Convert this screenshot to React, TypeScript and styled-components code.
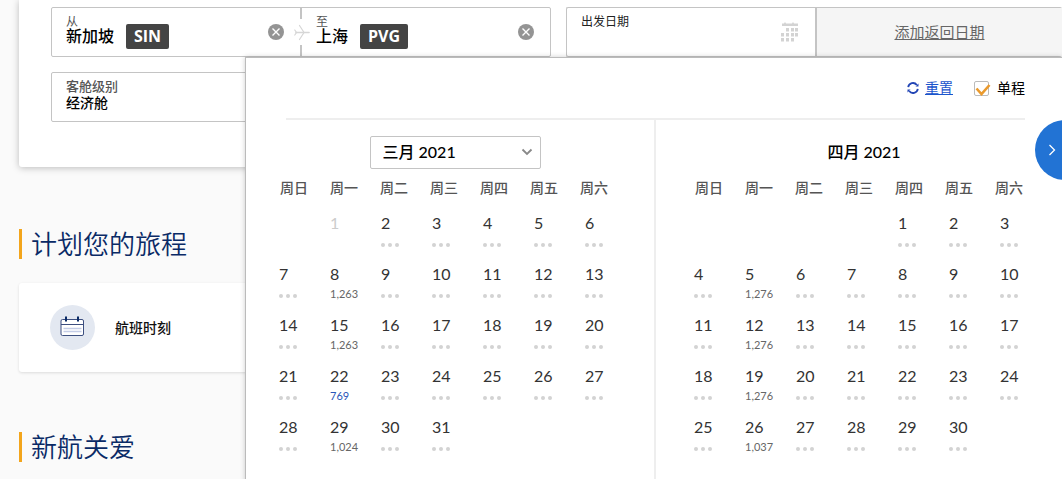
import React from "react";
import styled, { createGlobalStyle } from "styled-components";

const GlobalStyle = createGlobalStyle`
  *, *::before, *::after { box-sizing: border-box; }
  body {
    margin: 0;
    background: #fafafa;
    color: #000;
    font-family: Lato, "Noto Sans CJK SC", sans-serif;
    font-size: 14px;
    line-height: 20px;
  }
  button, input, select { font: inherit; color: inherit; margin: 0; padding: 0; border: 0; background: none; }
  button, select { cursor: pointer; }
  table { border-spacing: 0; }
`;

const Page = styled.div`
  position: relative;
  min-height: 100vh;
  padding-left: 19px;
  overflow: hidden;
`;

const SearchCard = styled.form`
  display: flex;
  flex-direction: column;
  gap: 15px;
  padding: 7px 0 45px 32px;
  background: #fff;
  border-radius: 0 0 0 3px;
  box-shadow: 0 1px 7px rgba(0, 0, 0, 0.25);
`;

const FieldRow = styled.div`
  display: flex;
  gap: 15px;
`;

const FieldGroup = styled.div<{ $grow?: boolean }>`
  position: relative;
  display: flex;
  flex: ${(p) => (p.$grow ? "1 0 0" : "0 0 500px")};
  height: 50px;
  border: 1px solid #c4c4c4;
  border-right-width: ${(p) => (p.$grow ? "0" : "1px")};
  border-radius: 2px;
`;

const Field = styled.div<{ $divided?: boolean }>`
  display: flex;
  flex: ${(p) => (p.$divided ? "0 0 250px" : "1 1 0")};
  align-items: flex-start;
  justify-content: space-between;
  padding: 4px 16px 0 14px;
  border-right: ${(p) => (p.$divided ? "2px solid #c4c4c4" : "0")};
`;

const FieldBody = styled.div`
  display: flex;
  flex-direction: column;
`;

const FieldLabel = styled.label<{ $strong?: boolean; $dark?: boolean }>`
  height: ${(p) => (p.$strong ? "17px" : "12px")};
  font-size: ${(p) => (p.$strong ? "13px" : "12px")};
  line-height: 19px;
  font-weight: ${(p) => (p.$strong ? 500 : 400)};
  color: ${(p) => (p.$dark ? "#222" : "#555")};
`;

const Place = styled.div`
  display: flex;
  align-items: flex-start;
  gap: 12px;
  height: 25px;
`;

const PlaceInput = styled.input<{ $chars: number }>`
  width: ${(p) => p.$chars}em;
  height: 22px;
  font-size: 16px;
  font-weight: 500;
  outline: 0;
`;

const AirportCode = styled.span`
  padding: 0 8px;
  border-radius: 2px;
  background: #444;
  color: #fff;
  font-family: "Open Sans", sans-serif;
  font-size: 16px;
  font-weight: 700;
  line-height: 25px;
`;

const ClearButton = styled.button`
  display: flex;
  margin-top: 12px;
`;

const SwapIcon = styled.svg`
  position: absolute;
  left: 241px;
  top: 11px;
  background: #fff;
`;

const DateInput = styled.input`
  width: 180px;
  height: 24px;
  font-size: 16px;
  outline: 0;
`;

const DateIcon = styled.svg`
  margin-top: 10px;
`;

const AddReturn = styled.button`
  flex: 1;
  background: #f5f5f5;
  color: #666;
  font-size: 15px;
  text-decoration: underline;
`;

const CabinSelect = styled.select`
  appearance: none;
  width: 200px;
  height: 18px;
  font-size: 14px;
  line-height: 18px;
  font-weight: 500;
`;

const Section = styled.section<{ $first?: boolean }>`
  padding-top: ${(p) => (p.$first ? "62px" : "60px")};
`;

const SectionTitle = styled.h2`
  margin: 0 0 24px;
  padding-left: 9px;
  border-left: 3px solid #f3a51c;
  color: #0a2a66;
  font-size: 26px;
  line-height: 30px;
  font-weight: 350;
`;

const LinkCard = styled.a`
  display: flex;
  align-items: center;
  gap: 20px;
  height: 89px;
  padding-left: 31px;
  border-radius: 3px;
  background: #fff;
  box-shadow: 0 1px 3px rgba(0, 0, 0, 0.12);
  color: #111;
  font-weight: 500;
  text-decoration: none;
`;

const Popover = styled.div`
  position: absolute;
  left: 245px;
  right: 0;
  top: 57px;
  min-height: calc(100vh - 57px);
  border: solid #bbb;
  border-width: 1px 0 0 1px;
  background: #fff;
  box-shadow: 0 0 5px rgba(0, 0, 0, 0.2);
`;

const Toolbar = styled.div`
  display: flex;
  align-items: center;
  justify-content: flex-end;
  gap: 21px;
  height: 62px;
  margin: 0 37px 0 40px;
  border-bottom: 2px solid #eee;
`;

const ResetButton = styled.button`
  display: flex;
  align-items: center;
  gap: 6px;
  color: #1a55cc;
  text-decoration: underline;
`;

const OneWay = styled.label`
  display: flex;
  align-items: center;
  gap: 8px;
`;

const TickWrap = styled.span`
  position: relative;
  display: flex;
`;

const Tick = styled.input`
  appearance: none;
  width: 15px;
  height: 15px;
  border: 1px solid #bbb;
  border-radius: 2px;
  &:not(:checked) + svg { display: none; }
`;

const TickMark = styled.svg`
  position: absolute;
  left: 0;
  top: 0;
  overflow: visible;
  pointer-events: none;
`;

const Months = styled.div`
  display: flex;
`;

const Month = styled.section<{ $divided?: boolean }>`
  flex: 0 0 ${(p) => (p.$divided ? "410px" : "395px")};
  padding: 16px 0 18px ${(p) => (p.$divided ? "33px" : "38px")};
  border-right: ${(p) => (p.$divided ? "2px solid #eee" : "0")};
`;

const MonthHead = styled.div<{ $wide?: boolean }>`
  display: flex;
  justify-content: center;
  width: ${(p) => (p.$wide ? "352px" : "340px")};
  height: 33px;
`;

const MonthTitle = styled.h3`
  margin: 0;
  font-size: 16px;
  line-height: 32px;
  font-weight: 500;
`;

const SelectWrap = styled.div`
  position: relative;
  width: 171px;
`;

const MonthSelect = styled.select`
  appearance: none;
  width: 100%;
  height: 33px;
  padding: 0 0 1px 12px;
  border: 1px solid #c4c4c4;
  border-radius: 2px;
  font-size: 16px;
  font-weight: 500;
`;

const SelectArrow = styled.svg`
  position: absolute;
  right: 8px;
  top: 12px;
  pointer-events: none;
`;

const WeekHead = styled.tr`
  display: grid;
  grid-template-columns: repeat(7, 50px);
  height: 41px;
  padding: 9px 0 0 1px;
`;

const WeekDay = styled.th`
  padding: 0;
  color: #555;
  text-align: left;
  font-weight: 500;
`;

const Week = styled.tr`
  display: grid;
  grid-template-columns: repeat(7, 51px);
  height: 51px;
`;

const DayCell = styled.td`
  padding: 0;
`;

const DayButton = styled.button`
  display: flex;
  flex-direction: column;
  align-items: flex-start;
  width: 44px;
  color: #333;
  font-size: 16px;
  line-height: 26px;
  &:disabled { color: #ccc; }
`;

const Fare = styled.span<{ $low?: boolean }>`
  color: ${(p) => (p.$low ? "#2a56b8" : "#666")};
  font-size: 11px;
  line-height: 14px;
`;

const Dots = styled.span`
  display: flex;
  gap: 3px;
  padding-top: 7px;
`;

const Dot = styled.span`
  width: 4px;
  height: 4px;
  border-radius: 50%;
  background: #d3d3d3;
`;

const NextButton = styled.button`
  position: absolute;
  right: -33px;
  top: 62px;
  display: flex;
  align-items: center;
  width: 60px;
  height: 60px;
  padding-left: 13px;
  border-radius: 50%;
  background: #2273d4;
`;

const WEEKDAYS = ["周日", "周一", "周二", "周三", "周四", "周五", "周六"];

type MonthData = { offset: number; days: number; fares: Record<number, string>; past?: number; low?: number };

const MARCH: MonthData = {
  offset: 1,
  days: 31,
  past: 1,
  low: 22,
  fares: { 8: "1,263", 15: "1,263", 22: "769", 29: "1,024" },
};
const APRIL: MonthData = {
  offset: 4,
  days: 30,
  fares: { 5: "1,276", 12: "1,276", 19: "1,276", 26: "1,037" },
};

function Clear({ label }: { label: string }) {
  return (
    <ClearButton type="button" aria-label={label}>
      <svg width="16" height="16" viewBox="0 0 16 16">
        <circle cx="8" cy="8" r="8" fill="#949494" />
        <path d="M4.5 4.5l7 7M11.5 4.5l-7 7" stroke="#fff" strokeWidth="1.4" />
      </svg>
    </ClearButton>
  );
}

function Airport({ id, label, city, code, divided }: { id: string; label: string; city: string; code: string; divided?: boolean }) {
  return (
    <Field $divided={divided}>
      <FieldBody>
        <FieldLabel htmlFor={id}>{label}</FieldLabel>
        <Place>
          <PlaceInput id={id} $chars={city.length} defaultValue={city} />
          <AirportCode>{code}</AirportCode>
        </Place>
      </FieldBody>
      <Clear label={`清除${city}`} />
    </Field>
  );
}

function Calendar({ data }: { data: MonthData }) {
  const weeks = Array.from({ length: Math.ceil((data.offset + data.days) / 7) }, (_, w) =>
    Array.from({ length: 7 }, (_, d) => w * 7 + d - data.offset + 1)
  );
  return (
    <table>
      <thead>
        <WeekHead>
          {WEEKDAYS.map((d) => (
            <WeekDay key={d} scope="col">{d}</WeekDay>
          ))}
        </WeekHead>
      </thead>
      <tbody>
        {weeks.map((week) => (
          <Week key={week[0]}>
            {week.map((day) => (
              <DayCell key={day}>
                {day > 0 && day <= data.days && (
                  <DayButton type="button" disabled={day === data.past}>
                    {day}
                    {data.fares[day] ? (
                      <Fare $low={day === data.low}>{data.fares[day]}</Fare>
                    ) : (
                      day !== data.past && <Dots><Dot /><Dot /><Dot /></Dots>
                    )}
                  </DayButton>
                )}
              </DayCell>
            ))}
          </Week>
        ))}
      </tbody>
    </table>
  );
}

export default function App() {
  return (
    <>
      <GlobalStyle />
      <Page>
        <SearchCard>
          <FieldRow>
            <FieldGroup>
              <Airport id="from" label="从" city="新加坡" code="SIN" divided />
              <Airport id="to" label="至" city="上海" code="PVG" />
              <SwapIcon width="18" height="26" viewBox="0 0 18 26" fill="none" stroke="#d6d6d6" strokeLinecap="round">
                <path d="M3 13.500h13" strokeWidth="1.600" />
                <path d="M6.500 6.500l4.500 7-4.500 7M1.800 11l1.700 2.500-1.700 2.500" strokeWidth="1.200" />
              </SwapIcon>
            </FieldGroup>
            <FieldGroup $grow>
              <Field $divided>
                <FieldBody>
                  <FieldLabel htmlFor="depart" $dark>出发日期</FieldLabel>
                  <DateInput id="depart" />
                </FieldBody>
                <DateIcon width="20" height="20" viewBox="0 0 20 20" fill="#d3d3d3">
                  <path d="M3 1.500h2L6 0l1 1.500h6L14 0l1 1.500h4V4H3z" />
                  {[6, 11, 16].map((y, r) =>
                    [2, 7, 12, 16].map((x, c) =>
                      (r === 0 && c === 0) || (r === 2 && c === 3) ? null : (
                        <rect key={`${x}-${y}`} x={x} y={y} width="3" height="3.500" />
                      )
                    )
                  )}
                </DateIcon>
              </Field>
              <AddReturn type="button">添加返回日期</AddReturn>
            </FieldGroup>
          </FieldRow>
          <FieldRow>
            <FieldGroup>
              <Field>
                <FieldBody>
                  <FieldLabel htmlFor="cabin" $strong>客舱级别</FieldLabel>
                  <CabinSelect id="cabin">
                    <option>经济舱</option>
                  </CabinSelect>
                </FieldBody>
              </Field>
            </FieldGroup>
          </FieldRow>
        </SearchCard>

        <Section $first>
          <SectionTitle>计划您的旅程</SectionTitle>
          <LinkCard href="#schedule">
            <svg width="45" height="45" viewBox="0 0 45 45">
              <circle cx="22.500" cy="22.500" r="22.500" fill="#e3e8f1" />
              <rect x="11" y="14.500" width="22.500" height="16" rx="1.500" fill="#fff" stroke="#3d4f80" />
              <path d="M11 19.500h22.500" stroke="#3d4f80" />
              <path d="M13.500 23.500h18M13.500 26.500h18" stroke="#c3cce6" strokeWidth="1.500" />
              <path d="M16 11.500v5M28 11.500v5" stroke="#0a2a66" strokeWidth="2" />
            </svg>
            航班时刻
          </LinkCard>
        </Section>
        <Section>
          <SectionTitle>新航关爱</SectionTitle>
        </Section>

        <Popover>
          <Toolbar>
            <ResetButton type="button">
              <svg width="12" height="12" viewBox="0 0 12 12" fill="none" stroke="#2245b5" strokeWidth="1.800">
                <path d="M1.200 5.200A4.800 4.800 0 0 1 9.800 3M10.800 6.800A4.800 4.800 0 0 1 2.200 9" />
                <path d="M11.500 1.500v3H8.500zM.5 10.500v-3h3z" fill="#2245b5" stroke="none" />
              </svg>
              重置
            </ResetButton>
            <OneWay>
              <TickWrap>
                <Tick type="checkbox" defaultChecked />
                <TickMark width="15" height="15" viewBox="0 0 15 15">
                  <path d="M2.500 7.500L7.500 13l8-9" fill="none" stroke="#ea9a2d" strokeWidth="2.600" />
                </TickMark>
              </TickWrap>
              单程
            </OneWay>
          </Toolbar>
          <Months>
            <Month $divided>
              <MonthHead $wide>
                <SelectWrap>
                  <MonthSelect aria-label="月份">
                    <option>三月 2021</option>
                  </MonthSelect>
                  <SelectArrow width="12" height="8" viewBox="0 0 12 8">
                    <path d="M1.500 1.500L6 6l4.500-4.500" fill="none" stroke="#888" strokeWidth="1.800" />
                  </SelectArrow>
                </SelectWrap>
              </MonthHead>
              <Calendar data={MARCH} />
            </Month>
            <Month>
              <MonthHead>
                <MonthTitle>四月 2021</MonthTitle>
              </MonthHead>
              <Calendar data={APRIL} />
            </Month>
          </Months>
          <NextButton type="button" aria-label="下个月">
            <svg width="8" height="12" viewBox="0 0 8 12">
              <path d="M1.500 1l5 5-5 5" fill="none" stroke="#fff" strokeWidth="1.300" />
            </svg>
          </NextButton>
        </Popover>
      </Page>
    </>
  );
}
